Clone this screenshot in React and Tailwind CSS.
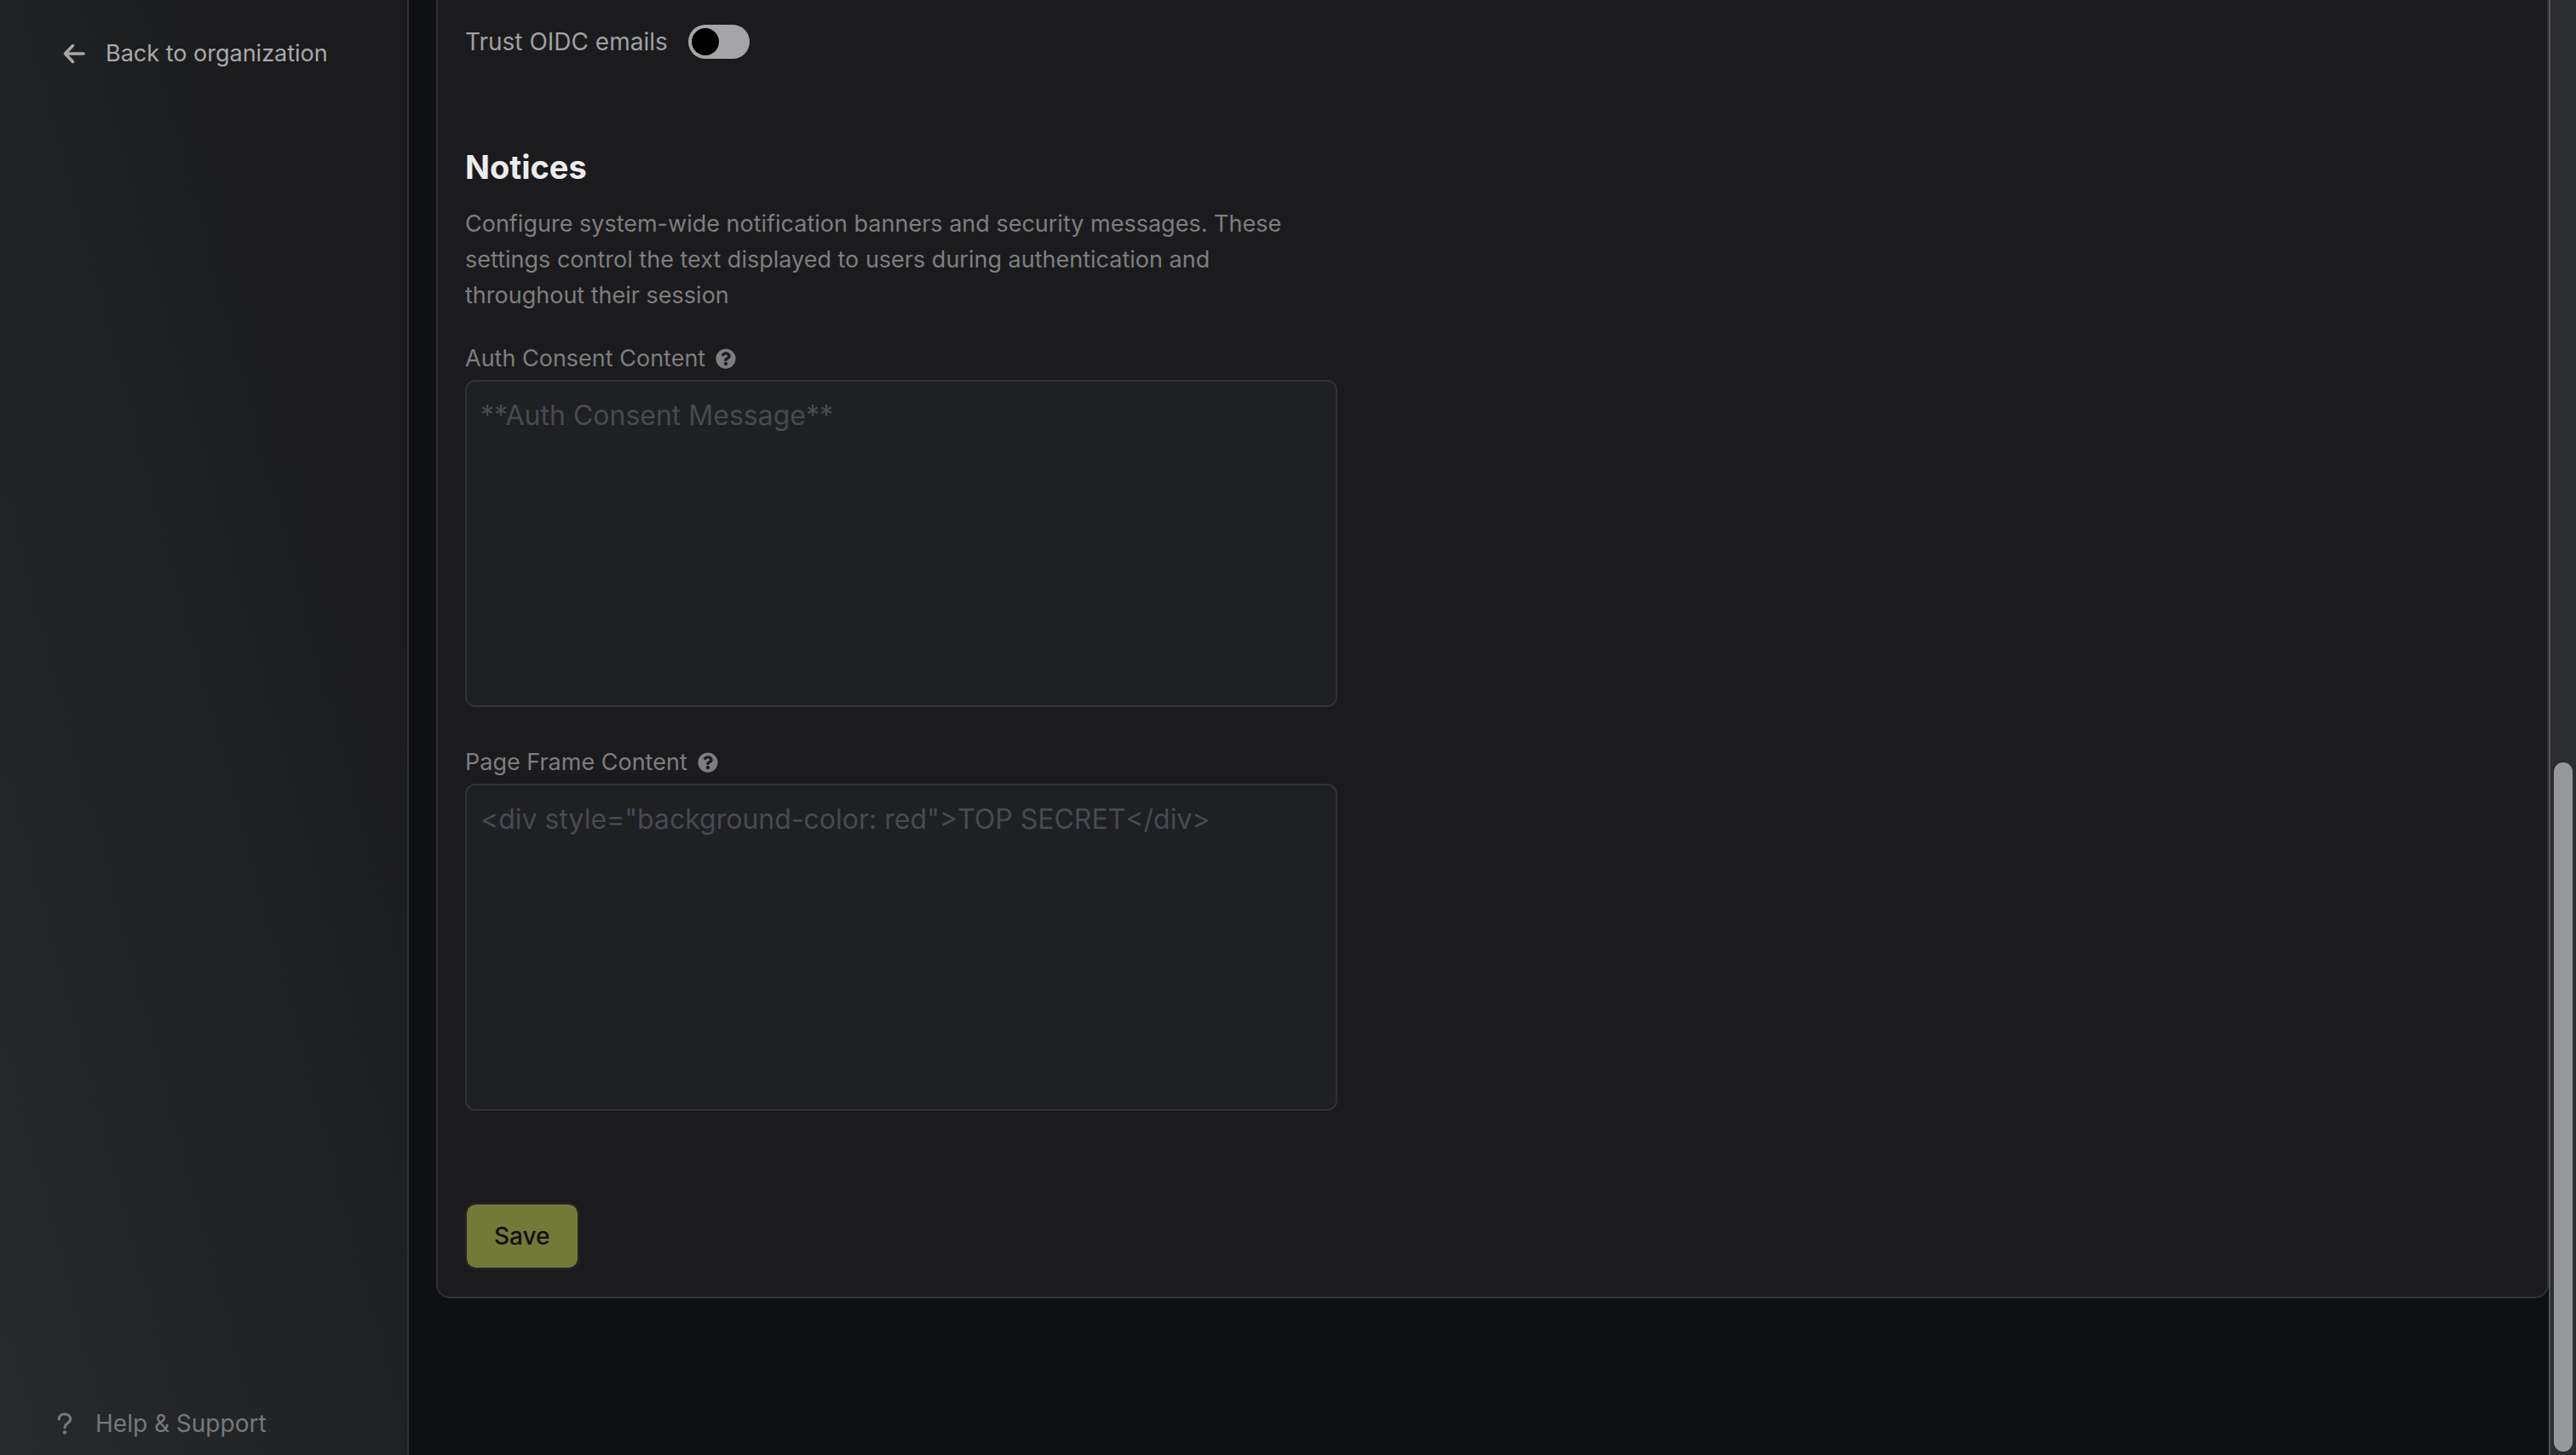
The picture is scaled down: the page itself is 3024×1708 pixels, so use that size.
import React, { useState } from "react";

const notices = [
  {
    id: "auth-consent",
    label: "Auth Consent Content",
    placeholder: "**Auth Consent Message**",
  },
  {
    id: "page-frame",
    label: "Page Frame Content",
    placeholder: '<div style="background-color: red">TOP SECRET</div>',
  },
];

function HelpBadge() {
  return (
    <svg viewBox="0 0 512 512" className="size-6" fill="currentColor" aria-hidden="true">
      <path d="M504 256c0 137-111 248-248 248S8 393 8 256C8 119.100 119 8 256 8s248 111.100 248 248zM262.700 90c-54.500 0-89.300 23-116.500 63.800-3.500 5.300-2.400 12.400 2.700 16.300l34.700 26.300c5.200 3.900 12.600 3 16.700-2.100 17.900-22.700 30.100-35.800 57.300-35.800 20.400 0 45.700 13.100 45.700 33 0 15-12.400 22.700-32.500 34C247.100 238.500 216 254.900 216 296v4c0 6.600 5.400 12 12 12h56c6.600 0 12-5.400 12-12v-1.300c0-28.500 83.200-29.600 83.200-106.700 0-58-60.200-102-116.500-102zM256 338c-25.400 0-46 20.600-46 46s20.600 46 46 46 46-20.600 46-46-20.600-46-46-46z" />
    </svg>
  );
}

function Sidebar() {
  return (
    <nav className="w-[480px] shrink-0 flex flex-col justify-between border-r-2 border-[#303134] bg-linear-[75deg] from-[#28292d] via-[#1f2122] via-50% to-[#1b1b1d] to-80% px-16 pt-[42px] pb-4">
      <a href="#organization" className="flex items-center gap-5 pl-2 text-[27px] text-[#a9a9aa]">
        <svg viewBox="0 0 32 32" className="size-8" fill="none" stroke="currentColor" strokeWidth="3.500" strokeLinecap="round" strokeLinejoin="round" aria-hidden="true">
          <path d="M13.500 6.500L4.500 16L13.500 25.500M4.500 16H26" />
        </svg>
        Back to organization
      </a>
      <a href="#help" className="flex items-center gap-6 text-[#77787a]">
        <svg viewBox="0 0 24 32" className="w-6 h-8" fill="none" stroke="currentColor" strokeWidth="3" strokeLinecap="round" strokeLinejoin="round" aria-hidden="true">
          <path d="M5.300 11V10.500C5.300 7 8 5 12 5S18.700 7.200 18.700 11C18.700 15.500 12 15.500 12 21" />
          <circle cx="12" cy="26.500" r="2.200" fill="currentColor" stroke="none" />
        </svg>
        Help &amp; Support
      </a>
    </nav>
  );
}

function App() {
  const [trustEmails, setTrustEmails] = useState(false);
  const [values, setValues] = useState({});

  return (
    <div className="h-screen flex overflow-hidden bg-[#0f1013] font-['Inter',sans-serif] text-[28px] leading-[42px]">
      <Sidebar />

      <main className="flex-1 min-w-0 pl-8">
        <form
          onSubmit={(e) => e.preventDefault()}
          className="flex flex-col items-start rounded-b-2xl border-2 border-t-0 border-[#303134] bg-[#1b1b1d] px-8 pt-7 pb-8"
        >
          <label className="flex items-center gap-6 text-[#a0a0a1]">
            Trust OIDC emails
            <input
              type="checkbox"
              role="switch"
              checked={trustEmails}
              onChange={(e) => setTrustEmails(e.target.checked)}
              className="appearance-none w-[72px] h-10 rounded-full bg-[#a5a5a7] p-1 before:block before:size-8 before:rounded-full before:bg-black checked:before:translate-x-8"
            />
          </label>

          <h2 className="mt-24 text-[38px] leading-[60px] font-bold text-[#ececed]">Notices</h2>
          <p className="mt-4 w-[1000px] max-w-full text-[27px] text-[#7e7e80]">
            Configure system-wide notification banners and security messages. These
            settings control the text displayed to users during authentication and
            throughout their session
          </p>

          {notices.map((n) => (
            <div key={n.id} className="mt-8 mb-3 flex flex-col w-[1024px] max-w-full">
              <label htmlFor={n.id} className="flex items-center gap-3 mb-1 text-[27px] text-[#7e7e80]">
                {n.label}
                <HelpBadge />
              </label>
              <textarea
                id={n.id}
                value={values[n.id] || ""}
                placeholder={n.placeholder}
                onChange={(e) => setValues({ ...values, [n.id]: e.target.value })}
                className="h-96 resize-none rounded-xl border-2 border-[#303238] bg-[#1f2022] px-4 py-4 text-[32px] leading-[48px] text-[#ececed] placeholder:text-[#484952] outline-none"
              />
            </div>
          ))}

          <button
            type="submit"
            className="mt-24 rounded-xl border-2 border-[#24252b] bg-[#737936] bg-clip-padding px-8 py-4 font-medium text-[#101011]"
          >
            Save
          </button>
        </form>
      </main>

      {/* scrollbar */}
      <div className="w-8 shrink-0 flex flex-col justify-end border-l-2 border-[#525355] bg-[#2c2d2f] pl-1 pr-1 pb-1">
        <div className="h-[47.5%] rounded-full bg-[#979899]" />
      </div>
    </div>
  );
}

export default App;
